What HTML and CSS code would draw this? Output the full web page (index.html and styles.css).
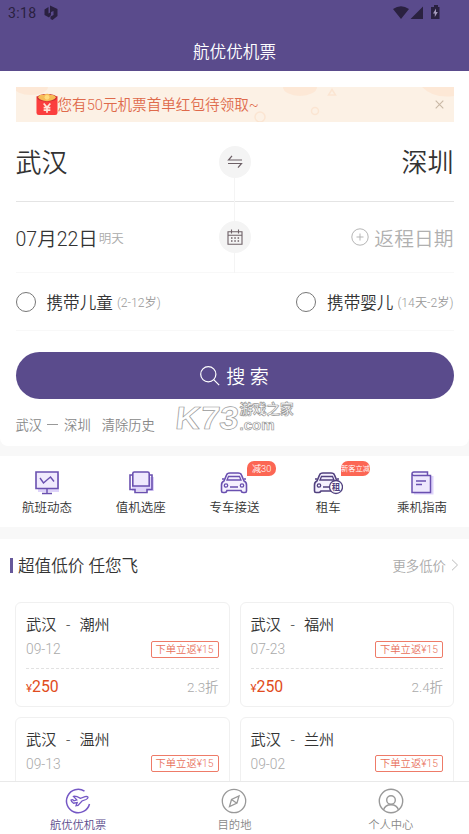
FILE: index.html
```html
<!DOCTYPE html>
<html lang="zh-CN">
<head>
<meta charset="utf-8">
<meta name="viewport" content="width=device-width, initial-scale=1">
<title>航优优机票</title>
<link rel="stylesheet" href="styles.css">
</head>
<body>
<div class="app">
  <header class="header">
    <div class="status">
      <span class="clock">3:18</span>
      <svg class="status-logo" width="14" height="16" viewBox="0 0 14 16"><path d="M4.500 2v6.500L7 7v3L5 12.500 0.500 10V4.500zM6 .5 13.500 4v7L8.500 15 6.500 14V11.500l3-1.500V6L6 7.500z" fill="#2a2140"/></svg>
      <svg class="status-right" width="48" height="16" viewBox="0 0 48 16" fill="#2a2140"><path d="M0 4Q8-1.500 16 4L8 14zM30 1.500V14H17.500zM39 2h2V0h4v2h1.500v12h-8.500V2z"/><path d="M43 3.500 40 8.500h1.800V12l3-5H43z" fill="#a59abc"/></svg>
    </div>
    <h1>航优优机票</h1>
  </header>

  <main class="content">
    <section class="search">
      <div class="banner">
        <svg class="banner-art" width="438" height="36" viewBox="0 0 438 36"><g fill="#fde8d6"><ellipse cx="15" cy="0" rx="17" ry="8"/><ellipse cx="284" cy="0" rx="17" ry="9"/><path d="M406 0Q418 12 438 9V0z"/></g><g fill="none" stroke="#fbe5d2" stroke-width="1.500"><path d="M316 2.500 319.500 8h-7z"/><circle cx="299" cy="24" r="3.500"/><circle cx="244" cy="30" r="5"/></g></svg>
        <svg class="packet" width="22" height="23" viewBox="0 0 23 23"><path d="M.5 3h22v17a2.500 2.500 0 0 1-2.500 2.500H3A2.500 2.500 0 0 1 .5 20z" fill="#fb3e3e"/><ellipse cx="11.500" cy="4.500" rx="10.500" ry="4" fill="#c92f32"/><path d="M2 4Q4 0 8 1.500q4-2.500 7 0 4-1 6 2.500-3 4-9.500 4T2 4" fill="#f6bb57"/><circle cx="11.500" cy="4" r="2.500" fill="#ffdc7c"/><path d="m8 10.500 3.500 4 3.500-4M11.500 14v6M8 14.800h7M8 17.300h7" fill="none" stroke="#ffe5d9" stroke-width="1.800"/></svg>
        <span class="banner-text">您有50元机票首单红包待领取~</span>
        <svg class="close" width="9" height="9" viewBox="0 0 9 9"><path d="m.7.7 7.600 7.600m0-7.600L.7 8.300" stroke="#c9b8a5" stroke-width="1.100"/></svg>
      </div>

      <div class="route">
        <span>武汉</span>
        <span class="round"><svg width="16" height="14" viewBox="0 0 16 14"><path d="M5 .8 1.500 5H15M1 8.500h13.500L11 12.700" fill="none" stroke="#6d6066" stroke-width="1.200"/></svg></span>
        <span class="to">深圳</span>
      </div>
      <div class="dates">
        <div class="depart"><b>07月22日</b><small>明天</small></div>
        <span class="round"><svg width="16" height="16" viewBox="0 0 16 16"><path d="M1 2.800h14v12.500H1zM1 6.300h14M4.500.5v4M11.500.5v4" fill="none" stroke="#6d6066" stroke-width="1.100"/><path d="M4 9h1.500M7.300 9h1.500M10.600 9h1.500M4 12h1.500M7.300 12h1.500M10.600 12h1.500" stroke="#6d6066" stroke-width="1.400"/></svg></span>
        <div class="return"><svg width="18" height="18" viewBox="0 0 18 18"><path d="M9 5.500v7M5.500 9h7" stroke="#b5b5b5"/><circle cx="9" cy="9" r="8.200" fill="none" stroke="#b5b5b5"/></svg><span>返程日期</span></div>
      </div>
      <div class="options">
        <div class="option"><i class="radio"></i><span>携带儿童</span><small>(2-12岁)</small></div>
        <div class="option"><i class="radio"></i><span>携带婴儿</span><small>(14天-2岁)</small></div>
      </div>
      <div class="submit"><svg width="20" height="20" viewBox="0 0 20 20"><circle cx="8.300" cy="8.300" r="7.600" fill="none" stroke="#fff" stroke-width="1.200"/><path d="m13.700 13.700 5.500 5.500" stroke="#fff" stroke-width="1.200"/></svg><span>搜 索</span></div>
      <div class="history"><span>武汉</span><i class="dash"></i><span>深圳</span><span class="clear">清除历史</span>
        <div class="watermark"><b>K73</b><div><span>游戏之家</span><em>.com</em></div></div>
      </div>
    </section>

    <nav class="services">
      <a class="service">
        <svg width="26" height="26" viewBox="0 0 26 26"><path d="M4 4h21v18H4z" fill="#ded3fa"/><path d="M2 2h22v16.500H2z" fill="#f0eafd" stroke="#6a50b0" stroke-width="1.600"/><path d="m6 8 3.500 5 4-3.500 3-2.500 3.500 4.500M13 18.500V23M8 23.500h10" fill="none" stroke="#6a50b0" stroke-width="1.400"/></svg>
        <span>航班动态</span>
      </a>
      <a class="service">
        <svg width="26" height="26" viewBox="0 0 26 26"><path d="M4 7h22v14H4z" fill="#ded3fa"/><path d="M4.500 5H2v14.500h5V22.500h12v-3h5V5h-2.500" fill="none" stroke="#6a50b0" stroke-width="1.600"/><path d="M4.800 3.500a1.500 1.500 0 0 1 1.500-1.500h13.400a1.500 1.500 0 0 1 1.500 1.500v12.500H4.800z" fill="#eee8fd" stroke="#6a50b0" stroke-width="1.600"/></svg>
        <span>值机选座</span>
      </a>
      <a class="service">
        <svg width="28" height="26" viewBox="0 0 28 26"><path d="M4 11 6.500 5Q7 3 10 3h8q3 0 3.500 2L24 11q2.500 1 2.500 4v6q0 1.500-1.500 1.500h-2q-1.500 0-2-2H7q-.5 2-2 2H3q-1.500 0-1.500-1.500v-6q0-3 2.500-4z" fill="#f5f1fe" stroke="#6a50b0" stroke-width="1.600"/><path d="M7 10 8.500 6.500H19.500L21 10zM2 9h2M24 9h2M10 17h8" fill="none" stroke="#6a50b0" stroke-width="1.300"/><circle cx="6" cy="15.500" r="1.700" fill="none" stroke="#6a50b0" stroke-width="1.300"/><circle cx="22" cy="15.500" r="1.700" fill="none" stroke="#6a50b0" stroke-width="1.300"/></svg>
        <span>专车接送</span><em class="tag">减30</em>
      </a>
      <a class="service">
        <svg width="30" height="26" viewBox="0 0 30 26"><path d="M4 11 6.500 5Q7 3 10 3h8q3 0 3.500 2L24 11q2.500 1 2.500 4v6H8q-1 1.500-2 1.500H3q-1.500 0-1.500-1.500v-6q0-3 2.500-4z" fill="#f5f1fe" stroke="#51417f" stroke-width="1.600"/><path d="M7 10 8.500 6.500H19.500L21 10zM2 9h2M24 9h2M10 17h8" fill="none" stroke="#51417f" stroke-width="1.300"/><circle cx="6" cy="15.500" r="1.700" fill="none" stroke="#51417f" stroke-width="1.300"/><circle cx="23" cy="17" r="6.500" fill="#fff" stroke="#51417f" stroke-width="1.300"/><text x="18.700" y="20.200" class="rent-glyph">租</text></svg>
        <span>租车</span><em class="tag tag-wide">新客立减</em>
      </a>
      <a class="service">
        <svg width="26" height="26" viewBox="0 0 26 26"><path d="M5 6h19.500v18.500H5z" fill="#ded3fa"/><path d="M3 4v18.500h18.500V5.500H5Q3 5.500 3 3.800 3 2 5 2h13.500v3.500" fill="#eee8fd" stroke="#6a50b0" stroke-width="1.500"/><path d="M7 11h10M7 14.500h6" stroke="#6a50b0" stroke-width="1.300"/></svg>
        <span>乘机指南</span>
      </a>
    </nav>

    <section class="deals">
      <div class="deals-head"><h2>超值低价 任您飞</h2><a>更多低价<svg width="8" height="12" viewBox="0 0 8 12"><path d="m1 .7 5.500 5.300L1 11.300" fill="none" stroke="#bbb"/></svg></a></div>
      <div class="grid">
        <article class="deal"><h3><span>武汉</span><i>-</i><span>潮州</span></h3><div class="row"><time>09-12</time><em>下单立返¥15</em></div><div class="price"><b><small>¥</small>250</b><span>2.3折</span></div></article>
        <article class="deal"><h3><span>武汉</span><i>-</i><span>福州</span></h3><div class="row"><time>07-23</time><em>下单立返¥15</em></div><div class="price"><b><small>¥</small>250</b><span>2.4折</span></div></article>
        <article class="deal"><h3><span>武汉</span><i>-</i><span>温州</span></h3><div class="row"><time>09-13</time><em>下单立返¥15</em></div></article>
        <article class="deal"><h3><span>武汉</span><i>-</i><span>兰州</span></h3><div class="row"><time>09-02</time><em>下单立返¥15</em></div></article>
      </div>
    </section>
  </main>

  <nav class="tabs">
    <a class="tab active"><svg width="26" height="26" viewBox="0 0 26 26" fill="none" stroke="#7558c5" stroke-width="1.500"><path d="M19.500 3.200A11.700 11.700 0 1 0 24.500 16"/><path d="M6 12q1.500-1 3 .8l2.800-.9-3.300-3.500q2-.8 7 2l4.500-1.700q3-.6 3 .8 0 1-2 2L17 13l-4 4.500-2 .3 1.200-3.300-3.700.7Q6.500 14 6 12z" stroke-width="1.300"/></svg><span>航优优机票</span></a>
    <a class="tab"><svg width="26" height="26" viewBox="0 0 26 26" fill="none" stroke="#999" stroke-width="1.300"><circle cx="13" cy="13" r="11.700"/><path d="m18 8-2 7-7.500 3.500 2-7zM10.500 11.500l5 3.500"/></svg><span>目的地</span></a>
    <a class="tab"><svg width="26" height="26" viewBox="0 0 26 26" fill="none" stroke="#999" stroke-width="1.400"><circle cx="13" cy="13" r="11.700"/><circle cx="13" cy="12" r="4.300"/><path d="M5.500 22q1.500-5.300 7.500-5.300t7.500 5.300"/></svg><span>个人中心</span></a>
  </nav>
</div>
</body>
</html>
```
FILE: styles.css
```css
* { box-sizing: border-box; margin: 0; padding: 0; }
body { font-family: Roboto, "Noto Sans CJK SC", sans-serif; font-weight: 350; color: #333; background: #f8f8f8; }
b, h1, h2, h3 { font-weight: inherit; }
i, em { font-style: normal; }
svg { display: block; flex: none; }
span, b, small, em, time { white-space: nowrap; }
.app { height: 834px; display: flex; flex-direction: column; overflow: hidden; }

.header { flex: none; height: 71px; background: #5a4b8c; }
.status { height: 26px; padding: 0 28px 0 8px; display: flex; align-items: center; color: #2a2140; }
.clock { font-size: 14px; font-weight: 400; letter-spacing: .4px; }
.status-logo { margin-left: 7px; }
.status-right { margin-left: auto; }
.header h1 { height: 45px; line-height: 53px; text-align: center; font-size: 16.600px; color: #fff; }

.content { flex: 1; min-height: 0; overflow: hidden; }
.search { height: 375px; padding: 16px 15.500px 0; background: #fff; border-radius: 0 0 8px 8px; }
.banner { position: relative; height: 35px; padding: 0 10px 0 20px; display: flex; align-items: center; background: #fcf1e5; overflow: hidden; }
.banner-art { position: absolute; left: 0; top: 0; }
.packet, .banner-text, .close { position: relative; }
.banner-text { padding-top: 2px; font-size: 14.600px; line-height: 35px; color: #df6a4b; }
.close { margin-left: auto; }

.route, .dates { display: grid; grid-template-columns: 1fr 32px 1fr; align-items: center; }
.route { height: 80px; border-bottom: 1px solid #e4e4e4; font-size: 26px; line-height: 78px; }
.route > span:not(.round) { padding-top: 2px; }
.to { text-align: right; }
.round { position: relative; width: 32px; height: 32px; border-radius: 50%; background: #f4f4f4; display: flex; align-items: center; justify-content: center; }
.round::after { content: ""; position: absolute; left: 15px; top: 32px; width: 1px; height: 43px; background: #f4f4f4; }
.dates .round::after { height: 20px; }
.dates { height: 71px; border-bottom: 1px solid #f8f8f8; }
.depart { display: flex; align-items: center; }
.depart b { font-size: 19.500px; }
.depart small { margin-left: 1px; font-size: 12.500px; color: #aaa; }
.return { display: flex; align-items: center; justify-content: flex-end; gap: 5px; font-size: 19.800px; color: #b0b0b0; }
.options { height: 58px; display: flex; justify-content: space-between; align-items: center; border-bottom: 1px solid #f8f8f8; }
.option { display: flex; align-items: center; font-size: 16.600px; }
.radio { width: 20px; height: 20px; border: 1px solid #777; border-radius: 50%; margin-right: 11px; }
.option small { font-size: 12.200px; color: #999; margin-left: 4px; }
.submit { height: 47px; margin-top: 21px; border-radius: 24px; background: #5a4b8c; color: #fff; display: flex; align-items: center; justify-content: center; gap: 6px; font-size: 19px; }
.history { position: relative; height: 46px; padding-top: 4px; display: flex; align-items: center; font-size: 13.300px; color: #888; }
.dash { width: 11px; height: 1px; margin: 0 6px 0 5px; background: #999; }
.clear { margin-left: 11px; }
.watermark { position: absolute; left: 158px; top: 4px; display: flex; gap: 9px; color: #fff; -webkit-text-stroke: .7px #999; font-family: "Liberation Sans", "Noto Sans CJK SC", sans-serif; }
.watermark b { width: 57px; font-size: 32px; line-height: 30px; font-weight: 700; transform: skewX(-6deg) scaleX(1.080); transform-origin: 0 100%; }
.watermark span { display: block; font-size: 13.500px; line-height: 14px; font-weight: 700; }
.watermark em { display: block; font-size: 15px; line-height: 15px; font-weight: 700; }

.services { height: 71px; margin: 10px 0 12px; background: #fff; display: grid; grid-template-columns: repeat(5, 1fr); }
.service { position: relative; padding-top: 13.500px; display: flex; flex-direction: column; align-items: center; font-size: 12.500px; }
.service > span { line-height: 24px; }
.tag { position: absolute; left: 59.500px; top: 5px; width: 29px; height: 15px; border-radius: 7px 7px 7px 0; background: #fc6654; color: #fff; font-size: 9.200px; line-height: 16px; text-align: center; overflow: hidden; }
.tag-wide { font-size: 7.300px; }
.rent-glyph { font-size: 8.500px; font-weight: 700; fill: #51417f; }

.deals { background: #fff; height: 300px; }
.deals-head { height: 63px; padding: 0 10px 11px; display: flex; align-items: center; justify-content: space-between; }
.deals-head h2 { display: flex; align-items: center; font-size: 16.600px; white-space: pre; }
.deals-head h2::before { content: ""; width: 3px; height: 15px; margin-right: 5px; background: #66589a; }
.deals-head a { display: flex; align-items: center; gap: 5px; font-size: 13.400px; color: #aaa; }
.grid { display: grid; grid-template-columns: 1fr 1fr; gap: 10px; padding: 0 15px; }
.deal { height: 104.500px; padding: 10px 10px 0; border: 1px solid #f0f0f0; border-radius: 6px; }
.deal h3 { display: flex; gap: 9.500px; height: 23px; line-height: 24px; font-size: 15.200px; }
.deal i { width: 4px; text-align: center; }
.row { height: 33px; padding-bottom: 6px; display: flex; align-items: center; justify-content: space-between; border-bottom: 1px dashed #e2e2e2; }
.row time { font-size: 13.800px; color: #aaa; }
.row em { height: 17px; width: 68px; border: 1px solid #ee7b68; border-radius: 2px; font-size: 10.300px; line-height: 15px; text-align: center; color: #e86f5a; }
.price { height: 34px; display: flex; align-items: center; justify-content: space-between; font-size: 13.400px; color: #aaa; }
.price b { font-size: 15.800px; color: #e14c20; font-weight: 400; }
.price small { font-size: 11.500px; }

.tabs { flex: none; height: 53px; background: #fff; border-top: 1px solid #e9e9e9; display: grid; grid-template-columns: repeat(3, 1fr); }
.tab { padding-top: 6px; display: flex; flex-direction: column; align-items: center; font-size: 11.300px; line-height: 23px; color: #888; }
.active { color: #5a4b8c; }
```
